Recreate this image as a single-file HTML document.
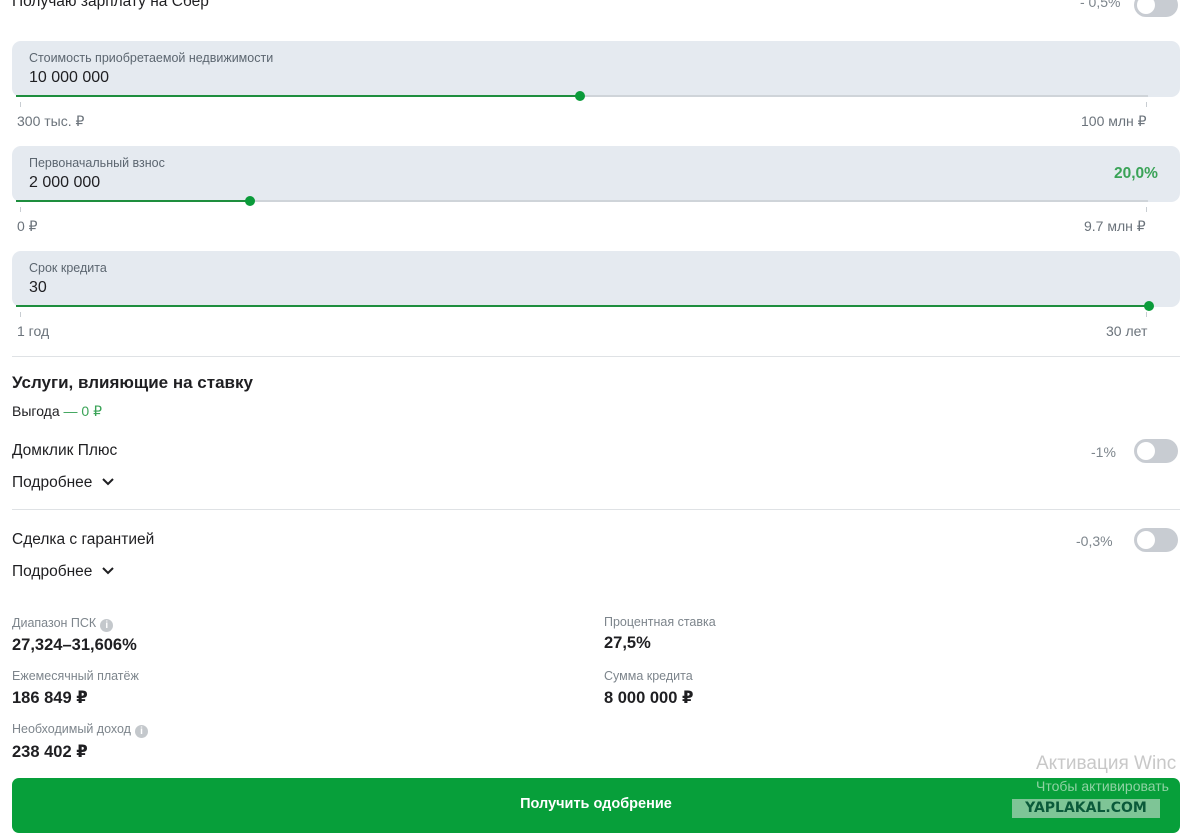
<!DOCTYPE html>
<html><head><meta charset="utf-8"><style>
*{margin:0;padding:0;box-sizing:border-box}
body{width:1182px;height:838px;background:#fff;position:relative;overflow:hidden;font-family:"Liberation Sans","DejaVu Sans",sans-serif;color:#1f1f22}
.a{position:absolute;white-space:nowrap}
.box{position:absolute;left:12px;width:1168px;height:56px;background:#e5eaf0;border-radius:9px}
.lbl{font-size:12.5px;color:#5c6670}
.val{font-size:16px;color:#1f1f22}
.track{position:absolute;left:16px;width:1132px;height:2px;background:#cfd4d9}
.fill{position:absolute;left:0;top:0;height:2px;background:#1e8e3e}
.dot{position:absolute;top:-4px;width:10px;height:10px;border-radius:50%;background:#0b9b3a;margin-left:-5px}
.tick{position:absolute;width:1px;height:5px;background:#c8cdd2}
.mm{font-size:14px;color:#6b737b}
.tog{position:absolute;width:44px;height:24px;border-radius:12px;background:#c8ccd2}
.tog::after{content:"";position:absolute;left:3px;top:3px;width:18px;height:18px;border-radius:50%;background:#fff}
.hr{position:absolute;left:12px;width:1168px;height:1px;background:#dfe2e5}
.sm{font-size:12.5px;color:#7d858c}
.big{font-size:16.5px;font-weight:bold;color:#1f1f22}
.t{font-size:15.5px}
.info{display:inline-block;width:13px;height:13px;border-radius:50%;background:#c4c8cc;color:#fff;font-size:10px;text-align:center;line-height:13px;font-weight:bold;vertical-align:-1px;margin-left:4px}
</style></head><body>
<div class="a t" style="left:12px;top:-7px">Получаю зарплату на Сбер</div>
<div class="a" style="left:1080px;top:-6px;font-size:14px;color:#7d858c">- 0,5%</div>
<div class="tog" style="left:1134px;top:-7px"></div>

<div class="box" style="top:41px"></div>
<div class="a lbl" style="left:29px;top:51px">Стоимость приобретаемой недвижимости</div>
<div class="a val" style="left:29px;top:69px">10 000 000</div>
<div class="track" style="top:95px"><div class="fill" style="width:564px"></div><div class="dot" style="left:564px"></div></div>
<div class="tick" style="left:20px;top:102px"></div><div class="tick" style="left:1146px;top:102px"></div>
<div class="a mm" style="left:17px;top:113px">300 тыс. ₽</div>
<div class="a mm" style="left:1081px;top:113px">100 млн ₽</div>

<div class="box" style="top:146px"></div>
<div class="a lbl" style="left:29px;top:156px">Первоначальный взнос</div>
<div class="a val" style="left:29px;top:174px">2 000 000</div>
<div class="a" style="left:1114px;top:165px;font-size:15.5px;color:#3aa357;font-weight:bold">20,0%</div>
<div class="track" style="top:200px"><div class="fill" style="width:234px"></div><div class="dot" style="left:234px"></div></div>
<div class="tick" style="left:20px;top:207px"></div><div class="tick" style="left:1146px;top:207px"></div>
<div class="a mm" style="left:17px;top:218px">0 ₽</div>
<div class="a mm" style="left:1084px;top:218px">9.7 млн ₽</div>

<div class="box" style="top:251px"></div>
<div class="a lbl" style="left:29px;top:261px">Срок кредита</div>
<div class="a val" style="left:29px;top:279px">30</div>
<div class="track" style="top:305px"><div class="fill" style="width:1133px"></div><div class="dot" style="left:1133px"></div></div>
<div class="tick" style="left:20px;top:312px"></div><div class="tick" style="left:1146px;top:312px"></div>
<div class="a mm" style="left:17px;top:323px">1 год</div>
<div class="a mm" style="left:1106px;top:323px">30 лет</div>

<div class="hr" style="top:356px"></div>
<div class="a" style="left:12px;top:373px;font-size:17px;font-weight:bold;color:#1f1f22">Услуги, влияющие на ставку</div>
<div class="a" style="left:12px;top:403px;font-size:14px">Выгода <span style="color:#3aa357">— 0 ₽</span></div>

<div class="a t" style="left:12px;top:442px">Домклик Плюс</div>
<div class="a" style="left:1091px;top:444px;font-size:14px;color:#7d858c">-1%</div>
<div class="tog" style="left:1134px;top:439px"></div>
<div class="a t" style="left:12px;top:474px">Подробнее <svg width="14" height="10" viewBox="0 0 14 10" style="margin-left:4px"><path d="M2 2l5 5 5-5" stroke="#1f1f22" stroke-width="2" fill="none"/></svg></div>
<div class="hr" style="top:509px"></div>

<div class="a t" style="left:12px;top:531px">Сделка с гарантией</div>
<div class="a" style="left:1076px;top:533px;font-size:14px;color:#7d858c">-0,3%</div>
<div class="tog" style="left:1134px;top:528px"></div>
<div class="a t" style="left:12px;top:563px">Подробнее <svg width="14" height="10" viewBox="0 0 14 10" style="margin-left:4px"><path d="M2 2l5 5 5-5" stroke="#1f1f22" stroke-width="2" fill="none"/></svg></div>

<div class="a sm" style="left:12px;top:616px">Диапазон ПСК<span class="info">i</span></div>
<div class="a big" style="left:12px;top:636px">27,324–31,606%</div>
<div class="a sm" style="left:12px;top:669px">Ежемесячный платёж</div>
<div class="a big" style="left:12px;top:688px">186 849 ₽</div>
<div class="a sm" style="left:12px;top:722px">Необходимый доход<span class="info">i</span></div>
<div class="a big" style="left:12px;top:742px">238 402 ₽</div>
<div class="a sm" style="left:604px;top:615px">Процентная ставка</div>
<div class="a big" style="left:604px;top:634px">27,5%</div>
<div class="a sm" style="left:604px;top:669px">Сумма кредита</div>
<div class="a big" style="left:604px;top:688px">8 000 000 ₽</div>

<div class="a" style="left:12px;top:778px;width:1168px;height:55px;background:#079f3a;border-radius:7px"></div>
<div class="a" style="left:12px;top:796px;width:1168px;text-align:center;color:#fff;font-size:14.5px;font-weight:bold">Получить одобрение</div>
<div class="a" style="left:1036px;top:753px;font-size:19px;color:#c8c8c8">Активация Winc</div>
<div class="a" style="left:1036px;top:778px;font-size:14px;color:#8fd2a3">Чтобы активировать</div>
<div class="a" style="left:1012px;top:799px;width:148px;height:19px;background:#7ec596;color:#0a5a3a;font-weight:bold;font-size:14px;text-align:center;line-height:19px;font-family:'DejaVu Sans',sans-serif">YAPLAKAL.COM</div>
</body></html>
